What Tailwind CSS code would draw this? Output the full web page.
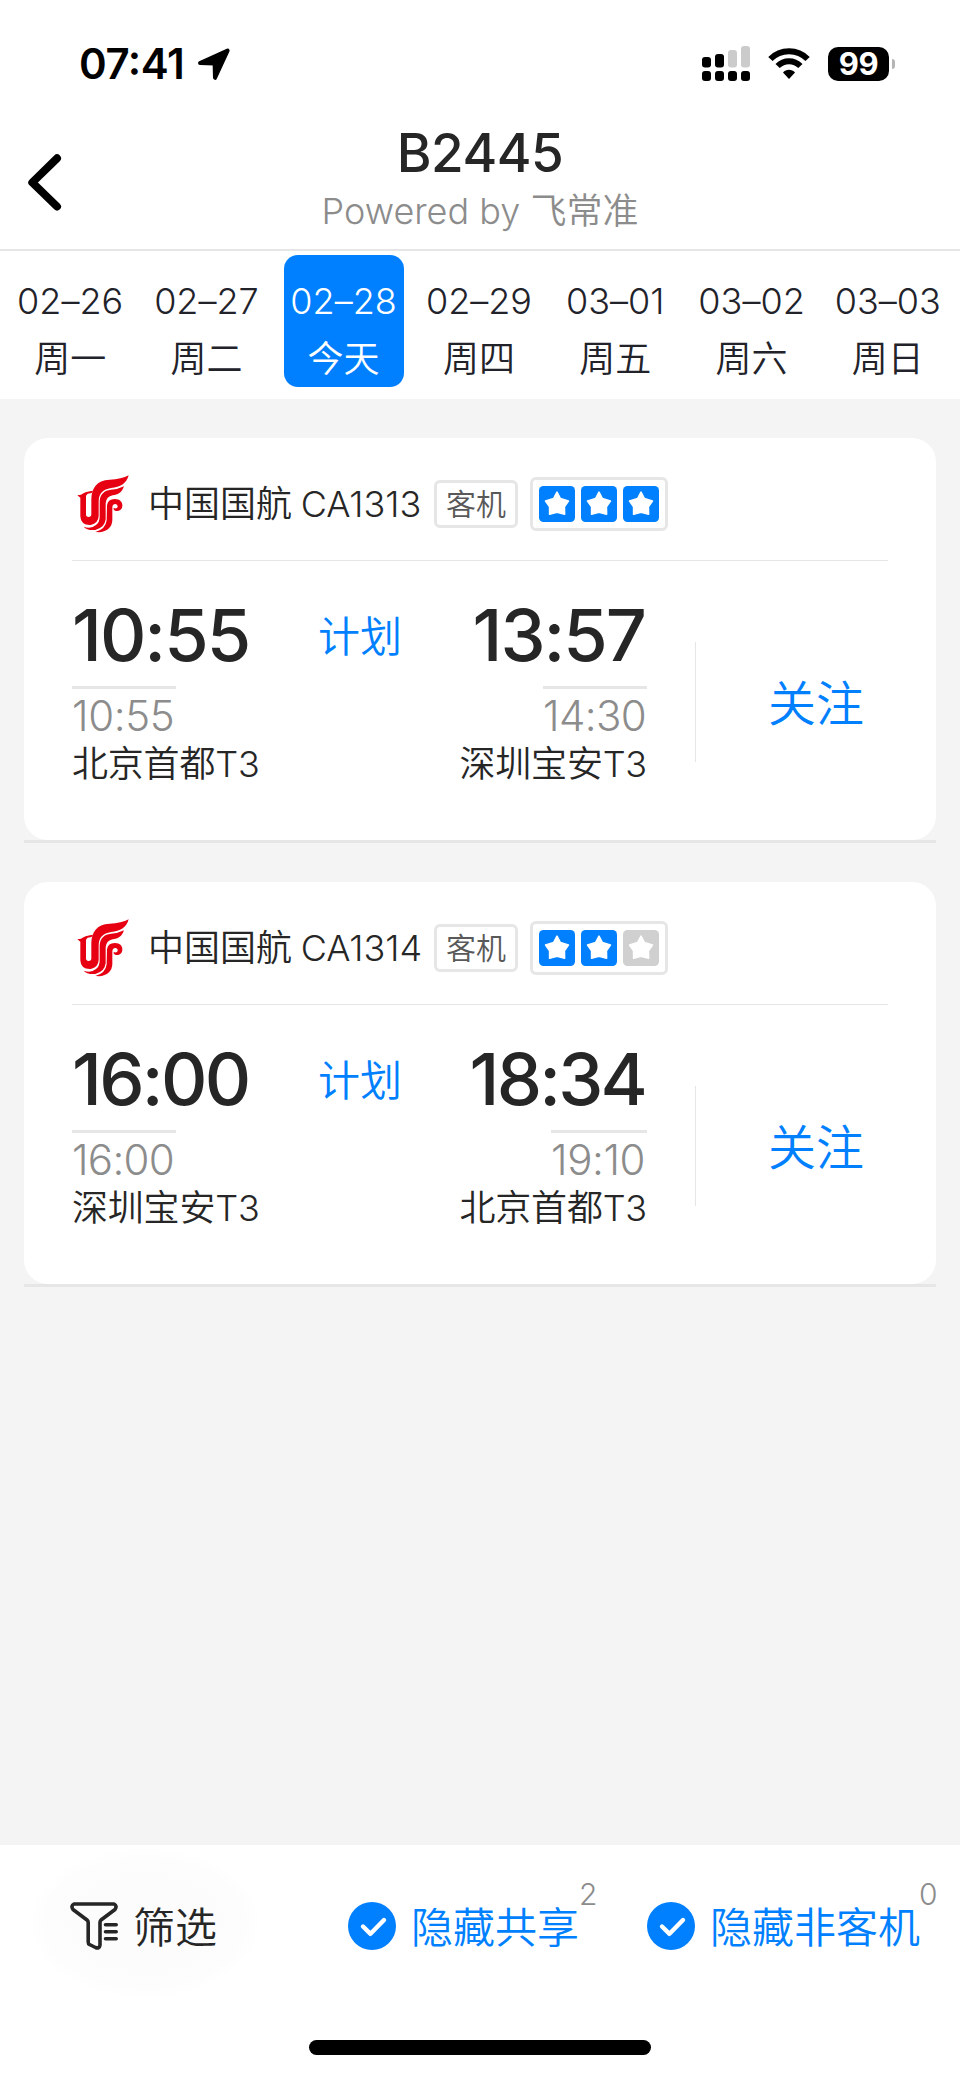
<!DOCTYPE html>
<html lang="zh-CN">
<head>
    <meta charset="UTF-8">
    <meta name="viewport" content="width=device-width, initial-scale=1.0">
    <title>B2445</title>
    <script src="https://cdn.jsdelivr.net/npm/@tailwindcss/browser@4"></script>
</head>
<body class="bg-[#f4f4f4] font-['Inter','Noto_Sans_CJK_SC',sans-serif] text-[#262626] [font-feature-settings:'calt'_0]">
    <!-- Shared icons -->
    <svg class="hidden">
        <symbol id="logo" viewBox="50 45 156 174">
            <path fill="#e60012" d="M51 106 L62 104 Q72 95 97 92 L94 99 L82 101 L77 107 V163 Q77 171 85 171 Q93 171 93 163 V117 C94 85 108 61 148 59 Q184 58 205 46 C198 72 180 81 152 84 C128 88 115 100 115 125 V168 Q114 190 91 195 Q61 196 60 169 V113 Z"></path>
            <path fill="#e60012" d="M191 79 C184 100 172 104 157 106 Q138 109 136 130 V178 Q133 203 105 210 Q80 212 70 200 Q92 208 107 195 Q118 186 118 170 V125 C119 102 132 91 152 89 Q174 88 191 79 Z"></path>
            <path fill="#e60012" d="M140 136 Q143 117 163 117 C180 117 187 127 186 138 C185 151 174 155 164 152 Q158 149 160 144 Q169 148 172 141 Q173 133 165 132 Q156 132 156 143 V180 Q155 211 118 217 L105 216 Q136 208 139 181 Z"></path>
        </symbol>
        <symbol id="star" viewBox="0 0 36 36">
            <rect width="36" height="36" rx="4.5" fill="currentColor"></rect>
            <path fill="#fff" stroke="#fff" stroke-width="1.6" stroke-linejoin="round" d="M18 6.2 L21.4 12.6 L29.4 15 L25.4 20.8 L25.6 28.2 L18 26.2 L10.6 28.2 L10.6 20.8 L6.6 15 L14.6 12.6 Z"></path>
        </symbol>
        <symbol id="check" viewBox="0 0 48 48">
            <circle cx="24" cy="24" r="24" fill="#007fff"></circle>
            <path fill="none" stroke="#fff" stroke-width="4.4" stroke-linecap="round" stroke-linejoin="round" d="M15 24.5 L22.5 31.8 L36 18"></path>
        </symbol>
    </svg>

    <div class="w-[960px] h-[2079px] flex flex-col overflow-hidden">
        <!-- Status bar -->
        <div class="h-[120px] shrink-0 bg-white flex items-start justify-between pl-[79px] pr-[65px] pt-[44px] text-black">
            <div class="flex items-center h-10">
                <span class="w-[119px] text-[42px] leading-10 font-semibold tracking-[-0.4px] [font-feature-settings:'calt'_1]">07:41</span>
                <svg class="w-8 h-8" viewBox="0 0 32 32">
                    <path stroke="#000" stroke-width="4" stroke-linejoin="round" d="M2 15 L29.6 2.6 L17 29.8 L16.6 15.4 Z"></path>
                </svg>
            </div>
            <div class="flex items-start">
                <svg class="w-[48px] h-[36px] mt-[2px] mr-[18px]" viewBox="0 0 48 36">
                    <g fill="#000">
                        <rect x="0" y="11" width="9" height="10.5" rx="3"></rect>
                        <rect x="13" y="8" width="9" height="13.5" rx="3"></rect>
                        <rect x="0" y="25" width="9" height="10" rx="3"></rect>
                        <rect x="13" y="25" width="9" height="10" rx="3"></rect>
                        <rect x="26" y="25" width="9" height="10" rx="3"></rect>
                        <rect x="39" y="25" width="9" height="10" rx="3"></rect>
                    </g>
                    <g fill="#cbcbcb">
                        <rect x="26" y="4" width="9" height="17.5" rx="3"></rect>
                        <rect x="39" y="0" width="9" height="21.5" rx="3"></rect>
                    </g>
                </svg>
                <svg class="w-[42px] h-[32px] mt-[3px] mr-[18px]" viewBox="0 0 42 32">
                    <g fill="none" stroke="#000" stroke-width="6">
                        <path d="M2.4 12 C12.5 1.6 29.5 1.6 39.6 12"></path>
                        <path d="M9.6 19 C16 12.6 26 12.6 32.4 19"></path>
                    </g>
                    <path fill="#000" d="M15 25.5 C18 21.8 24 21.8 27 25.5 L21 32 Z"></path>
                </svg>
                <div class="w-[61px] h-[34px] mt-[3px] rounded-[10px] bg-black text-white text-[31px] leading-[34px] font-bold text-center tracking-[-0.5px]">99</div>
                <div class="w-[3px] h-[10px] mt-[15px] ml-[3px] rounded-r-full bg-[#b5b5b5]"></div>
            </div>
        </div>

        <!-- Header -->
        <div class="h-[131px] shrink-0 bg-white border-b-2 border-[#e6e6e6] grid grid-cols-[100px_1fr_100px]">
            <svg class="w-[34px] h-[57px] ml-[28px] mt-[34px]" viewBox="0 0 34 57">
                <path fill="none" stroke="#000" stroke-width="8" stroke-linecap="round" stroke-linejoin="round" d="M29 4.3 L4.3 28.5 L29 52.5"></path>
            </svg>
            <div class="text-center">
                <h1 class="mt-[5px] text-[53px] leading-[56px] font-[480] tracking-[-0.5px]">B2445</h1>
                <p class="text-[36px] leading-[60px] font-[350] text-[#8c8c8c]">Powered by 飞常准</p>
            </div>
        </div>

        <!-- Dates -->
        <div class="h-[148px] shrink-0 bg-white grid grid-cols-7 pl-[2px] pr-[4px] pt-1 text-[36px] font-[350] text-[#22222a] text-center">
            <div class="pt-[18px]"><p class="leading-[56px]">02–26</p><p class="mt-[2px] leading-[56px]">周一</p></div>
            <div class="pt-[18px]"><p class="leading-[56px]">02–27</p><p class="mt-[2px] leading-[56px]">周二</p></div>
            <div class="w-[120px] h-[132px] ml-[9px] pt-[18px] rounded-[14px] bg-[#007fff] text-white"><p class="leading-[56px]">02–28</p><p class="mt-[2px] leading-[56px]">今天</p></div>
            <div class="pt-[18px]"><p class="leading-[56px]">02–29</p><p class="mt-[2px] leading-[56px]">周四</p></div>
            <div class="pt-[18px]"><p class="leading-[56px]">03–01</p><p class="mt-[2px] leading-[56px]">周五</p></div>
            <div class="pt-[18px]"><p class="leading-[56px]">03–02</p><p class="mt-[2px] leading-[56px]">周六</p></div>
            <div class="pt-[18px]"><p class="leading-[56px]">03–03</p><p class="mt-[2px] leading-[56px]">周日</p></div>
        </div>

        <!-- Flights -->
        <div class="flex-1 px-6 pt-[39px] flex flex-col gap-[39px]">
            <div class="border-b-3 border-[#e6e6e6]">
                <div class="h-[402px] bg-white rounded-3xl px-12 pt-[10px]">
                    <div class="h-[113px] border-b border-[#e6e6e6] flex items-center">
                        <svg class="w-[52px] h-[58px] ml-[5px] mr-[19px]"><use href="#logo"></use></svg>
                        <span class="w-[286px] text-[36px] leading-[48px] font-[350] whitespace-nowrap [word-spacing:-1.5px]">中国国航 CA1313</span>
                        <span class="w-[84px] h-12 border-3 border-[#e6e6e6] rounded-md text-[30px] leading-[43px] font-[350] text-[#595959] text-center">客机</span>
                        <div class="ml-3 h-[54px] border-3 border-[#e6e6e6] rounded-md px-[6px] flex items-center gap-[6px] text-[#007fff]">
                            <svg class="w-9 h-9"><use href="#star"></use></svg>
                            <svg class="w-9 h-9"><use href="#star"></use></svg>
                            <svg class="w-9 h-9"><use href="#star"></use></svg>
                        </div>
                    </div>
                    <div class="flex">
                        <div class="w-[575px] grid grid-cols-[228px_1fr_auto] pt-[34px]">
                            <div class="flex flex-col items-start whitespace-nowrap">
                                <p class="text-[72px] leading-[80px] font-medium tracking-[-2px]">10:55</p>
                                <p class="mt-[11px] w-[104px] border-t-3 border-[#e6e6e6] text-[42px] leading-[54px] font-[350] tracking-[-0.4px] text-[#8c8c8c]">10:55</p>
                                <p class="text-[36px] leading-[42px] font-[350] tracking-[-0.2px]">北京首都T3</p>
                            </div>
                            <p class="ml-[18px] mt-[2px] text-[42px] leading-[80px] font-[350] text-[#007fff]">计划</p>
                            <div class="flex flex-col items-end whitespace-nowrap">
                                <p class="mr-[2px] text-[72px] leading-[80px] font-medium tracking-[-2px]">13:57</p>
                                <p class="mt-[11px] w-[104px] border-t-3 border-[#e6e6e6] text-[42px] leading-[54px] font-[350] tracking-[-0.6px] text-[#8c8c8c]">14:30</p>
                                <p class="text-[36px] leading-[42px] font-[350] tracking-[-0.2px]">深圳宝安T3</p>
                            </div>
                        </div>
                        <div class="w-px h-[120px] mt-[81px] ml-12 bg-[#e6e6e6]"></div>
                        <button class="ml-[72px] mt-[118px] h-[50px] text-[48px] leading-[50px] font-[350] text-[#007fff] whitespace-nowrap">关注</button>
                    </div>
                </div>
            </div>

            <div class="border-b-3 border-[#e6e6e6]">
                <div class="h-[402px] bg-white rounded-3xl px-12 pt-[10px]">
                    <div class="h-[113px] border-b border-[#e6e6e6] flex items-center">
                        <svg class="w-[52px] h-[58px] ml-[5px] mr-[19px]"><use href="#logo"></use></svg>
                        <span class="w-[286px] text-[36px] leading-[48px] font-[350] whitespace-nowrap [word-spacing:-1.5px]">中国国航 CA1314</span>
                        <span class="w-[84px] h-12 border-3 border-[#e6e6e6] rounded-md text-[30px] leading-[43px] font-[350] text-[#595959] text-center">客机</span>
                        <div class="ml-3 h-[54px] border-3 border-[#e6e6e6] rounded-md px-[6px] flex items-center gap-[6px] text-[#007fff]">
                            <svg class="w-9 h-9"><use href="#star"></use></svg>
                            <svg class="w-9 h-9"><use href="#star"></use></svg>
                            <svg class="w-9 h-9 text-[#d0d0d0]"><use href="#star"></use></svg>
                        </div>
                    </div>
                    <div class="flex">
                        <div class="w-[575px] grid grid-cols-[228px_1fr_auto] pt-[34px]">
                            <div class="flex flex-col items-start whitespace-nowrap">
                                <p class="text-[72px] leading-[80px] font-medium tracking-[-2.7px]">16:00</p>
                                <p class="mt-[11px] w-[104px] border-t-3 border-[#e6e6e6] text-[42px] leading-[54px] font-[350] tracking-[-0.7px] text-[#8c8c8c]">16:00</p>
                                <p class="text-[36px] leading-[42px] font-[350] tracking-[-0.2px]">深圳宝安T3</p>
                            </div>
                            <p class="ml-[18px] mt-[2px] text-[42px] leading-[80px] font-[350] text-[#007fff]">计划</p>
                            <div class="flex flex-col items-end whitespace-nowrap">
                                <p class="mr-[2px] text-[72px] leading-[80px] font-medium tracking-[-2.8px]">18:34</p>
                                <p class="mt-[11px] w-[96px] border-t-3 border-[#e6e6e6] text-[42px] leading-[54px] font-[350] tracking-[-0.4px] text-[#8c8c8c]">19:10</p>
                                <p class="text-[36px] leading-[42px] font-[350] tracking-[-0.2px]">北京首都T3</p>
                            </div>
                        </div>
                        <div class="w-px h-[120px] mt-[81px] ml-12 bg-[#e6e6e6]"></div>
                        <button class="ml-[72px] mt-[118px] h-[50px] text-[48px] leading-[50px] font-[350] text-[#007fff] whitespace-nowrap">关注</button>
                    </div>
                </div>
            </div>
        </div>

        <!-- Filter bar -->
        <div class="h-[234px] shrink-0 bg-white flex flex-col items-center pt-[57px]">
            <div class="w-full h-12 flex items-center pl-[70px] text-[42px] leading-[48px] font-[350] whitespace-nowrap">
                <div class="relative w-[278px] flex items-center">
                    <!-- soft glow behind the filter button -->
                    <div class="absolute -left-[42px] -top-[53px] w-[234px] h-[152px] rounded-full bg-[radial-gradient(closest-side,#fcfcfc_60%,#fdfdfd_85%,#ffffff)]"></div>
                    <svg class="relative w-12 h-12 mr-[15px]" viewBox="0 0 48 48" fill="none" stroke="#262626" stroke-width="3.6" stroke-linecap="round" stroke-linejoin="round">
                        <path d="M4 2 H44 Q47.5 4 45 7.5 L31 18 Q30 19 30 20.5 V43 Q29.5 47 25.5 45.5 L19.5 42.5 Q18.2 42 18.2 40 V20.5 Q18.2 19 17 18 L3 7.5 Q0.5 4 4 2 Z"></path>
                        <path d="M35.5 22.8 H46.2 M35.5 29.8 H46.2 M35.5 36.8 H46.2"></path>
                    </svg>
                    <span class="relative pt-[4px]">筛选</span>
                </div>
                <div class="relative w-[299px] flex items-center text-[#007fff]">
                    <svg class="w-12 h-12 mr-[15px]"><use href="#check"></use></svg>
                    <span class="pt-[4px]">隐藏共享</span>
                    <span class="absolute left-[231px] -top-[22px] text-[30px] leading-[32px] text-[#8c8c8c]">2</span>
                </div>
                <div class="relative flex items-center text-[#007fff]">
                    <svg class="w-12 h-12 mr-[15px]"><use href="#check"></use></svg>
                    <span class="pt-[4px]">隐藏非客机</span>
                    <span class="absolute left-[272px] -top-[22px] text-[30px] leading-[32px] text-[#8c8c8c]">0</span>
                </div>
            </div>
            <div class="mt-[90px] w-[342px] h-[15px] rounded-full bg-black"></div>
        </div>
    </div>
</body>
</html>
